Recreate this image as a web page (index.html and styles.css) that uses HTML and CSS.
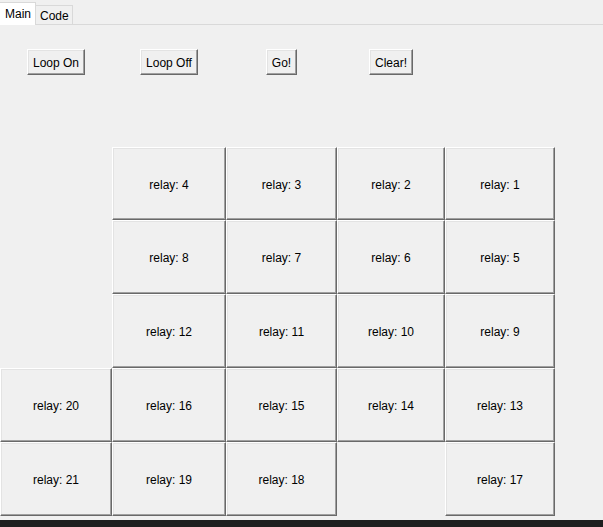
FILE: index.html
```html
<!DOCTYPE html>
<html>
<head>
<meta charset="utf-8">
<link rel="stylesheet" href="styles.css">
</head>
<body>
<div class="window">
  <div class="tabs">
    <div class="tab active">Main</div>
    <div class="tab">Code</div>
  </div>
  <div class="controls cols">
    <div class="cell"><button class="btn">Loop On</button></div>
    <div class="cell"><button class="btn">Loop Off</button></div>
    <div class="cell"><button class="btn">Go!</button></div>
    <div class="cell"><button class="btn">Clear!</button></div>
  </div>
  <div class="relays cols">
    <div class="empty"></div>
    <button class="relay">relay: 4</button>
    <button class="relay">relay: 3</button>
    <button class="relay">relay: 2</button>
    <button class="relay">relay: 1</button>

    <div class="empty"></div>
    <button class="relay">relay: 8</button>
    <button class="relay">relay: 7</button>
    <button class="relay">relay: 6</button>
    <button class="relay">relay: 5</button>

    <div class="empty"></div>
    <button class="relay">relay: 12</button>
    <button class="relay">relay: 11</button>
    <button class="relay">relay: 10</button>
    <button class="relay">relay: 9</button>

    <button class="relay">relay: 20</button>
    <button class="relay">relay: 16</button>
    <button class="relay">relay: 15</button>
    <button class="relay">relay: 14</button>
    <button class="relay">relay: 13</button>

    <button class="relay">relay: 21</button>
    <button class="relay">relay: 19</button>
    <button class="relay">relay: 18</button>
    <div class="empty"></div>
    <button class="relay">relay: 17</button>
  </div>
</div>
<div class="taskbar"></div>
</body>
</html>
```

FILE: styles.css
```css
html, body {
  margin: 0;
  padding: 0;
}
body {
  width: 603px;
  height: 527px;
  background: #f0f0f0;
  font-family: "Liberation Sans", Arial, sans-serif;
  font-size: 12px;
  color: #000;
  display: flex;
  flex-direction: column;
  overflow: hidden;
}
.window {
  flex: 1;
  background: #f0f0f0;
}
.tabs {
  display: flex;
  align-items: flex-end;
  height: 24px;
  border-bottom: 1px solid #d9d9d9;
}
.tab {
  box-sizing: border-box;
  border: 1px solid #d9d9d9;
  border-bottom: none;
  line-height: 18px;
}
.tab.active {
  height: 23px;
  margin-bottom: -1px;
  background: #fff;
  padding: 2px 4px 0 5px;
  border-left: none;
}
.tab:not(.active) {
  height: 19px;
  padding: 1px 3px 0 4px;
  border-left: none;
}
.cols {
  display: grid;
  grid-template-columns: 112px 114px 111px 108px 110px;
}
.controls {
  padding-top: 24px;
  height: 122px;
  box-sizing: border-box;
  align-items: start;
}
.cell {
  display: flex;
  justify-content: center;
}
.btn, .relay {
  font-family: inherit;
  font-size: 12px;
  color: #000;
  background: #f0f0f0;
  box-sizing: border-box;
  border: 1px solid;
  border-color: #ffffff #696969 #696969 #ffffff;
  box-shadow: inset -1px -1px 0 #a0a0a0, inset 1px 1px 0 #e3e3e3;
  margin: 0;
  border-radius: 0;
  cursor: default;
}
.btn {
  height: 26px;
  padding: 1px 5px 0 5px;
}
.relays {
  grid-template-rows: 73px 74px 74px 74px 74px;
}
.relay {
  width: 100%;
  height: 100%;
  padding: 2px 0 0 0;
}
.taskbar {
  height: 7px;
  background: #1e1e1e;
  border-top: 4px solid #f0f0f0;
}
```
